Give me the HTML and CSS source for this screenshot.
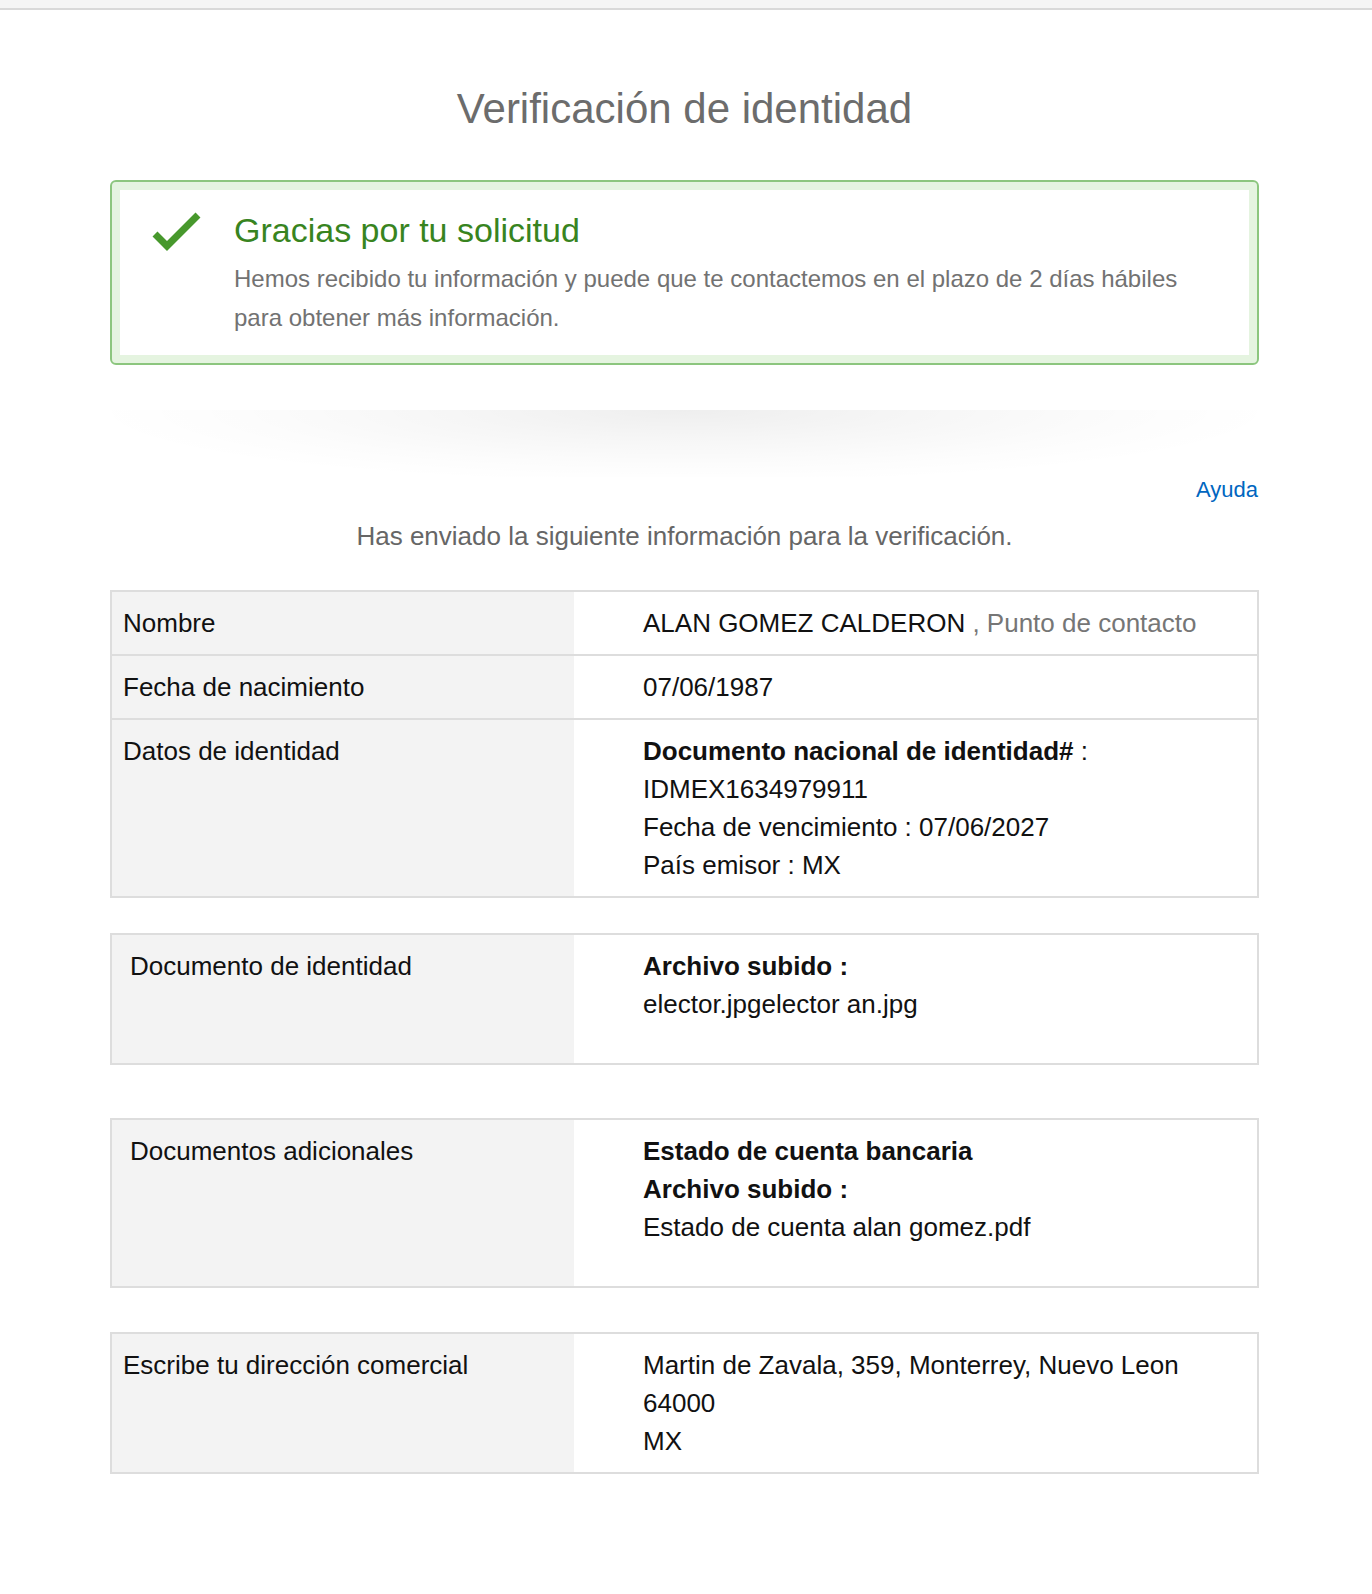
FILE: index.html
```html
<!DOCTYPE html>
<html lang="es">
<head>
<meta charset="utf-8">
<title>Verificación de identidad</title>
<link rel="stylesheet" href="styles.css">
</head>
<body>
<div class="topbar"></div>
<main class="page">
  <h1 class="title">Verificación de identidad</h1>

  <div class="alert">
    <svg class="alert-icon" viewBox="0 0 52 44" width="52" height="44" aria-hidden="true">
      <polyline points="5,24 17,36 48,5" fill="none" stroke="#47982c" stroke-width="7" stroke-linecap="butt" stroke-linejoin="miter"/>
    </svg>
    <div class="alert-content">
      <h4 class="alert-heading">Gracias por tu solicitud</h4>
      <p class="alert-text">Hemos recibido tu información y puede que te contactemos en el plazo de 2 días hábiles para obtener más información.</p>
    </div>
  </div>

  <div class="divider"></div>

  <div class="help"><a href="#">Ayuda</a></div>
  <p class="intro">Has enviado la siguiente información para la verificación.</p>

  <section class="info info-first">
    <div class="row">
      <div class="label">Nombre</div>
      <div class="value">ALAN GOMEZ CALDERON <span class="muted">, Punto de contacto</span></div>
    </div>
    <div class="row">
      <div class="label">Fecha de nacimiento</div>
      <div class="value">07/06/1987</div>
    </div>
    <div class="row">
      <div class="label">Datos de identidad</div>
      <div class="value">
        <div><b>Documento nacional de identidad#</b> :</div>
        <div>IDMEX1634979911</div>
        <div>Fecha de vencimiento : 07/06/2027</div>
        <div>País emisor : MX</div>
      </div>
    </div>
  </section>

  <section class="info info-second">
    <div class="row">
      <div class="label label-wide">Documento de identidad</div>
      <div class="value value-tall">
        <div><b>Archivo subido :</b></div>
        <div>elector.jpgelector an.jpg</div>
      </div>
    </div>
  </section>

  <section class="info info-third">
    <div class="row">
      <div class="label label-wide">Documentos adicionales</div>
      <div class="value value-tall">
        <div><b>Estado de cuenta bancaria</b></div>
        <div><b>Archivo subido :</b></div>
        <div>Estado de cuenta alan gomez.pdf</div>
      </div>
    </div>
  </section>

  <section class="info info-fourth">
    <div class="row">
      <div class="label">Escribe tu dirección comercial</div>
      <div class="value">
        <div>Martin de Zavala, 359, Monterrey, Nuevo Leon</div>
        <div>64000</div>
        <div>MX</div>
      </div>
    </div>
  </section>
</main>
</body>
</html>
```
FILE: styles.css
```css
html, body {
  margin: 0;
  padding: 0;
  background: #ffffff;
}

body {
  font-family: "Liberation Sans", Arial, Helvetica, sans-serif;
  color: #111111;
}

.topbar {
  height: 8px;
  background: #f5f5f5;
  border-bottom: 2px solid #d9d9d9;
}

.page {
  width: 1149px;
  margin-left: 110px;
  padding-bottom: 120px;
}

.title {
  margin: 74px 0 0;
  font-size: 42px;
  line-height: 50px;
  font-weight: normal;
  text-align: center;
  color: #6c6c6c;
}

.alert {
  margin-top: 46px;
  display: flex;
  align-items: flex-start;
  border: 2px solid #8cc67e;
  border-radius: 6px;
  box-shadow: inset 0 0 0 8px #e5f4e0;
  padding: 28px 40px 26px 38px;
}

.alert-icon {
  flex: none;
  display: block;
  width: 52px;
  height: 44px;
  margin-right: 32px;
}

.alert-content {
  flex: 1;
  min-width: 0;
}

.alert-heading {
  margin: 0;
  font-size: 34px;
  line-height: 40px;
  font-weight: normal;
  color: #38841f;
}

.alert-text {
  margin: 10px 0 0;
  font-size: 24px;
  line-height: 38.5px;
  color: #727272;
}

.divider {
  margin-top: 45px;
  height: 67px;
  background:
    radial-gradient(ellipse 52% 110% at 50% 0%, rgba(0, 0, 0, 0.065) 0%, rgba(0, 0, 0, 0.035) 40%, rgba(0, 0, 0, 0.012) 75%, rgba(0, 0, 0, 0) 100%);
}

.help {
  text-align: right;
  font-size: 22px;
  line-height: 26px;
  padding-right: 1px;
}

.help a {
  color: #0066c0;
  text-decoration: none;
}

.intro {
  margin: 14px 0 0;
  text-align: center;
  font-size: 26px;
  line-height: 38px;
  color: #666666;
}

.info {
  border: 2px solid #dddddd;
  font-size: 26px;
  line-height: 38px;
  color: #111111;
}

.info-first { margin-top: 35px; }
.info-second { margin-top: 35px; }
.info-third { margin-top: 53px; }
.info-fourth { margin-top: 44px; }

.row {
  display: grid;
  grid-template-columns: 462px 1fr;
}

.row + .row {
  border-top: 2px solid #dddddd;
}

.label {
  background: #f3f3f3;
  padding: 12px 11px;
}

.label-wide {
  padding-left: 18px;
}

.value {
  padding: 12px 20px 12px 69px;
}

.value-tall {
  padding-bottom: 40px;
}

.value b {
  font-weight: bold;
}

.muted {
  color: #767676;
}
```
